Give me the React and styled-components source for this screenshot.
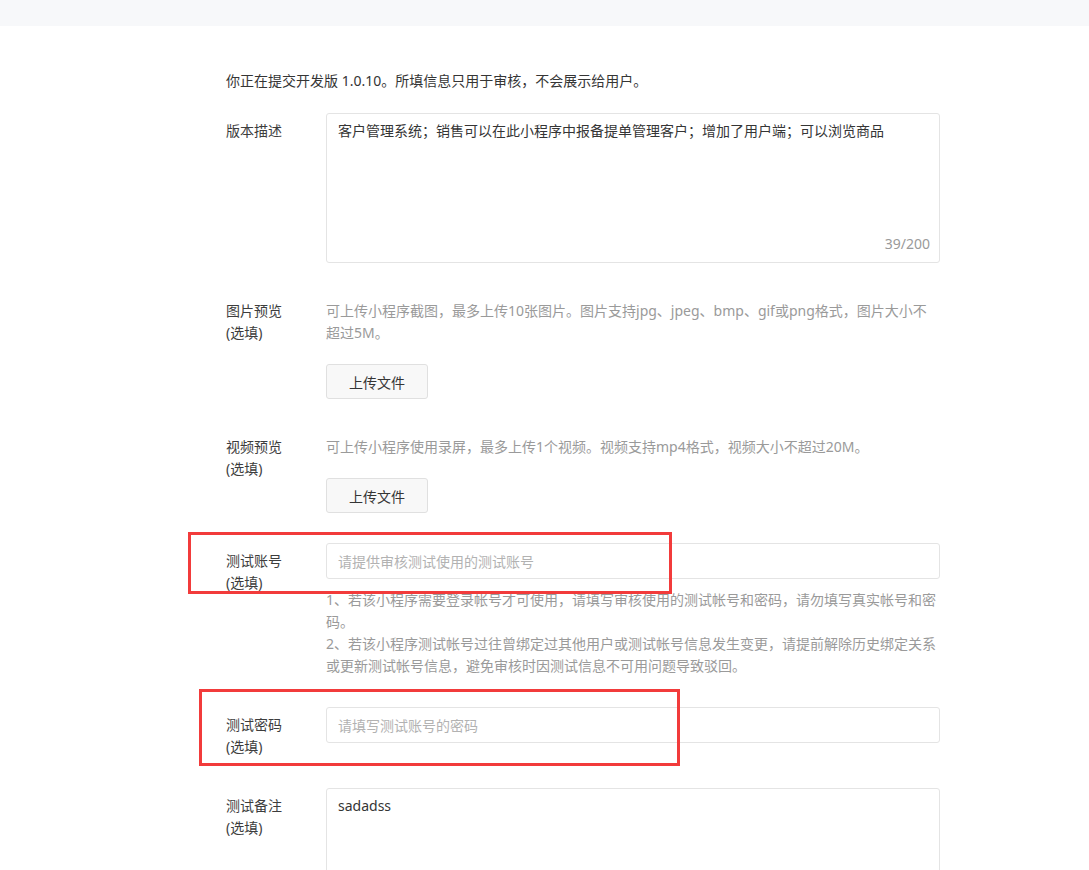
import styled, { createGlobalStyle } from "styled-components";

const GlobalStyle = createGlobalStyle`
  html, body {
    margin: 0;
    padding: 0;
    background: #fff;
    font-family: "Noto Sans", "Noto Sans CJK SC", sans-serif;
    font-size: 14px;
    color: #353535;
  }
`;

const accountTips = [
  "1、若该小程序需要登录帐号才可使用，请填写审核使用的测试帐号和密码，请勿填写真实帐号和密码。",
  "2、若该小程序测试帐号过往曾绑定过其他用户或测试帐号信息发生变更，请提前解除历史绑定关系或更新测试帐号信息，避免审核时因测试信息不可用问题导致驳回。",
];

export default function App() {
  return (
    <>
      <GlobalStyle />
      <StyledHeader>
        <StyledTitle>提交审核</StyledTitle>
      </StyledHeader>
      <StyledMain>
        <StyledIntro>你正在提交开发版 1.0.10。所填信息只用于审核，不会展示给用户。</StyledIntro>

        <StyledRow>
          <StyledLabel>版本描述</StyledLabel>
          <StyledTextareaBox $height={150}>
            <StyledValue>客户管理系统；销售可以在此小程序中报备提单管理客户；增加了用户端；可以浏览商品</StyledValue>
            <StyledCounter>39/200</StyledCounter>
          </StyledTextareaBox>
        </StyledRow>

        <StyledRow>
          <StyledLabel>
            图片预览
            <br />
            (选填)
          </StyledLabel>
          <StyledField>
            <StyledHint $pad>
              可上传小程序截图，最多上传10张图片。图片支持jpg、jpeg、bmp、gif或png格式，图片大小不超过5M。
            </StyledHint>
            <StyledButton>上传文件</StyledButton>
          </StyledField>
        </StyledRow>

        <StyledRow>
          <StyledLabel>
            视频预览
            <br />
            (选填)
          </StyledLabel>
          <StyledField>
            <StyledHint $pad>可上传小程序使用录屏，最多上传1个视频。视频支持mp4格式，视频大小不超过20M。</StyledHint>
            <StyledButton>上传文件</StyledButton>
          </StyledField>
        </StyledRow>

        <StyledRow>
          <StyledMark $left={-38} $top={-11} $width={484} $height={62} />
          <StyledLabel>
            测试账号
            <br />
            (选填)
          </StyledLabel>
          <StyledField>
            <StyledInput placeholder="请提供审核测试使用的测试账号" />
            <StyledTips>
              {accountTips.map((tip) => (
                <StyledHint key={tip}>{tip}</StyledHint>
              ))}
            </StyledTips>
          </StyledField>
        </StyledRow>

        <StyledRow>
          <StyledMark $left={-27} $top={-18} $width={481} $height={77} />
          <StyledLabel>
            测试密码
            <br />
            (选填)
          </StyledLabel>
          <StyledField>
            <StyledInput placeholder="请填写测试账号的密码" />
          </StyledField>
        </StyledRow>

        <StyledRow>
          <StyledLabel>
            测试备注
            <br />
            (选填)
          </StyledLabel>
          <StyledTextareaBox $height={150}>
            <StyledValue>sadadss</StyledValue>
          </StyledTextareaBox>
        </StyledRow>
      </StyledMain>
    </>
  );
}

const StyledHeader = styled.header`
  height: 26px;
  background: #f7f8fa;
  overflow: hidden;
`;

const StyledTitle = styled.div`
  margin: -20px 0 0 5px;
  font-size: 16px;
  line-height: 22px;
  color: #353535;
`;

const StyledMain = styled.main`
  padding: 44px 0 0 226px;
  width: 714px;
`;

const StyledIntro = styled.p`
  margin: 0 0 21px;
  line-height: 22px;
`;

const StyledRow = styled.div`
  position: relative;
  display: grid;
  grid-template-columns: 100px 614px;
  margin-bottom: 30px;
`;

const StyledLabel = styled.div`
  padding-top: 7px;
  line-height: 22px;
  color: #3d3d3d;
`;

const StyledField = styled.div`
  display: flex;
  flex-direction: column;
  align-items: flex-start;
`;

const StyledHint = styled.div`
  padding-top: ${(p) => (p.$pad ? "7px" : "0")};
  line-height: 22px;
  color: #9a9a9a;
`;

const StyledTips = styled.div`
  margin-top: 10px;
`;

const StyledButton = styled.button`
  margin-top: 20px;
  width: 102px;
  height: 35px;
  border: 1px solid #e0e0e0;
  border-radius: 3px;
  background: #f8f8f8;
  font-family: inherit;
  font-size: 14px;
  color: #353535;
`;

const StyledInput = styled.input`
  box-sizing: border-box;
  width: 100%;
  height: 36px;
  padding: 0 11px;
  border: 1px solid #e4e4e4;
  border-radius: 3px;
  font-family: inherit;
  font-size: 14px;
  color: #353535;
  outline: none;

  &::placeholder {
    color: #b2b2b2;
  }
`;

const StyledTextareaBox = styled.div`
  position: relative;
  box-sizing: border-box;
  height: ${(p) => p.$height}px;
  padding: 6px 11px;
  border: 1px solid #e4e4e4;
  border-radius: 3px;
`;

const StyledValue = styled.div`
  line-height: 22px;
  color: #353535;
`;

const StyledCounter = styled.span`
  position: absolute;
  right: 9px;
  bottom: 7px;
  line-height: 22px;
  color: #9a9a9a;
`;

const StyledMark = styled.div`
  position: absolute;
  left: ${(p) => p.$left}px;
  top: ${(p) => p.$top}px;
  width: ${(p) => p.$width}px;
  height: ${(p) => p.$height}px;
  box-sizing: border-box;
  border: 3px solid #f23b3b;
  pointer-events: none;
`;
